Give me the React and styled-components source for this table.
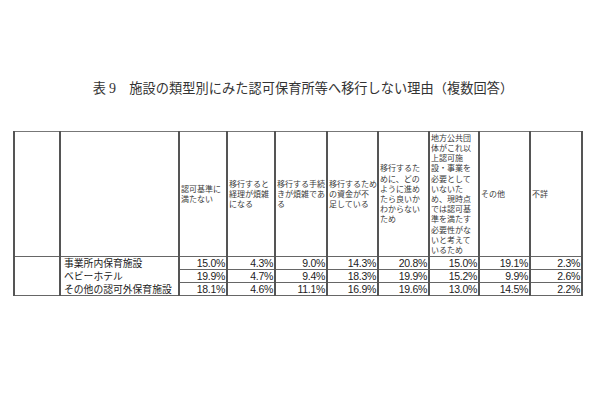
import React from 'react';
import styled, {createGlobalStyle} from 'styled-components';

const GlobalStyle = createGlobalStyle`
	body {
		margin: 0;
		background: #fff;
	}
`;

// header lines are broken as in the printed table
const headers = [
	['認可基準に', '満たない'],
	['移行すると', '経理が煩雑', 'になる'],
	['移行する手続', 'きが煩雑であ', 'る'],
	['移行するため', 'の資金が不', '足している'],
	['移行するた', 'めに、どの', 'ように進め', 'たら良いか', 'わからない', 'ため'],
	['地方公共団', '体がこれ以', '上認可施', '設・事業を', '必要として', 'いないた', 'め、現時点', 'では認可基', '準を満たす', '必要性がな', 'いと考えて', 'いるため'],
	['その他'],
	['不詳'],
];

const widths = [48, 48, 52, 51, 51, 50, 51, 52];

const rows = [
	{label: '事業所内保育施設', values: ['15.0%', '4.3%', '9.0%', '14.3%', '20.8%', '15.0%', '19.1%', '2.3%']},
	{label: 'ベビーホテル', values: ['19.9%', '4.7%', '9.4%', '18.3%', '19.9%', '15.2%', '9.9%', '2.6%']},
	{label: 'その他の認可外保育施設', values: ['18.1%', '4.6%', '11.1%', '16.9%', '19.6%', '13.0%', '14.5%', '2.2%']},
];

const App = () => (
	<Page>
		<GlobalStyle />
		<Title>
			表<Num>9</Num>　施設の類型別にみた認可保育所等へ移行しない理由（複数回答）
		</Title>
		<Table>
			<colgroup>
				<col style={{width: 46}} />
				<col style={{width: 119}} />
				{widths.map((w, i) => (
					<col key={i} style={{width: w}} />
				))}
			</colgroup>
			<tbody>
				<tr>
					<BlankCell />
					<BlankCell />
					{headers.map((lines, i) => (
						<HeadCell key={i}>
							{lines.map(l => (
								<HeadLine key={l}>{l}</HeadLine>
							))}
						</HeadCell>
					))}
				</tr>
				{rows.map((r, i) => (
					<tr key={r.label}>
						{i === 0 && <BlankCell rowSpan={3} />}
						<LabelCell $last={i === rows.length - 1}>{r.label}</LabelCell>
						{r.values.map((v, j) => (
							<ValueCell key={j}>{v}</ValueCell>
						))}
					</tr>
				))}
			</tbody>
		</Table>
	</Page>
);

const Page = styled.div`
	width: 600px;
	height: 400px;
	padding-top: 79px;
	box-sizing: border-box;
	overflow: hidden;
`;

const Title = styled.h1`
	margin: 0 0 33px 0;
	padding-left: 6px;
	text-align: center;
	font-family: 'Noto Sans CJK JP', sans-serif;
	font-weight: 400;
	font-size: 13.2px;
	line-height: 18px;
	letter-spacing: 0.05px;
	color: #333;
`;

const Num = styled.span`
	font-family: 'Liberation Serif', serif;
	font-size: 14px;
	padding-left: 3px;
`;

const Table = styled.table`
	margin-left: 13px;
	border-collapse: collapse;
	table-layout: fixed;
	width: 568px;
	font-family: 'Noto Sans CJK JP', sans-serif;
	color: #222;
	border-top: 1px solid #777;
	border-bottom: 1px solid #666;
	border-left: 2px solid #666;
	border-right: 1px solid #bbb;
`;

const BlankCell = styled.td`
	border-left: 2px solid #555;
	border-right: 2px solid #555;
	border-bottom: 1px solid #666;
	padding: 0;
`;

const HeadCell = styled.td`
	height: 124px;
	padding: 0 0 0 1px;
	vertical-align: middle;
	border-left: 2px solid #555;
	border-right: 2px solid #555;
	border-bottom: 1px solid #666;
	font-size: 8px;
	line-height: 10.2px;
	color: #3a3a3a;
	overflow: visible;
`;

const HeadLine = styled.div`
	white-space: nowrap;
`;

const LabelCell = styled.td`
	height: 12px;
	padding: 0 0 0 3px;
	font-size: 9.8px;
	line-height: 12px;
	white-space: nowrap;
	border-bottom: ${p => (p.$last ? '1px solid #666' : 'none')};
	border-right: 2px solid #555;
	color: #1a1a1a;
`;

const ValueCell = styled.td`
	height: 12px;
	padding: 0 1px 0 0;
	text-align: right;
	font-family: 'Liberation Sans', sans-serif;
	font-size: 10.5px;
	line-height: 12px;
	letter-spacing: -0.3px;
	border-bottom: 1px solid #666;
	border-left: 2px solid #555;
	border-right: 2px solid #555;
	color: #222;
`;

export default App;
